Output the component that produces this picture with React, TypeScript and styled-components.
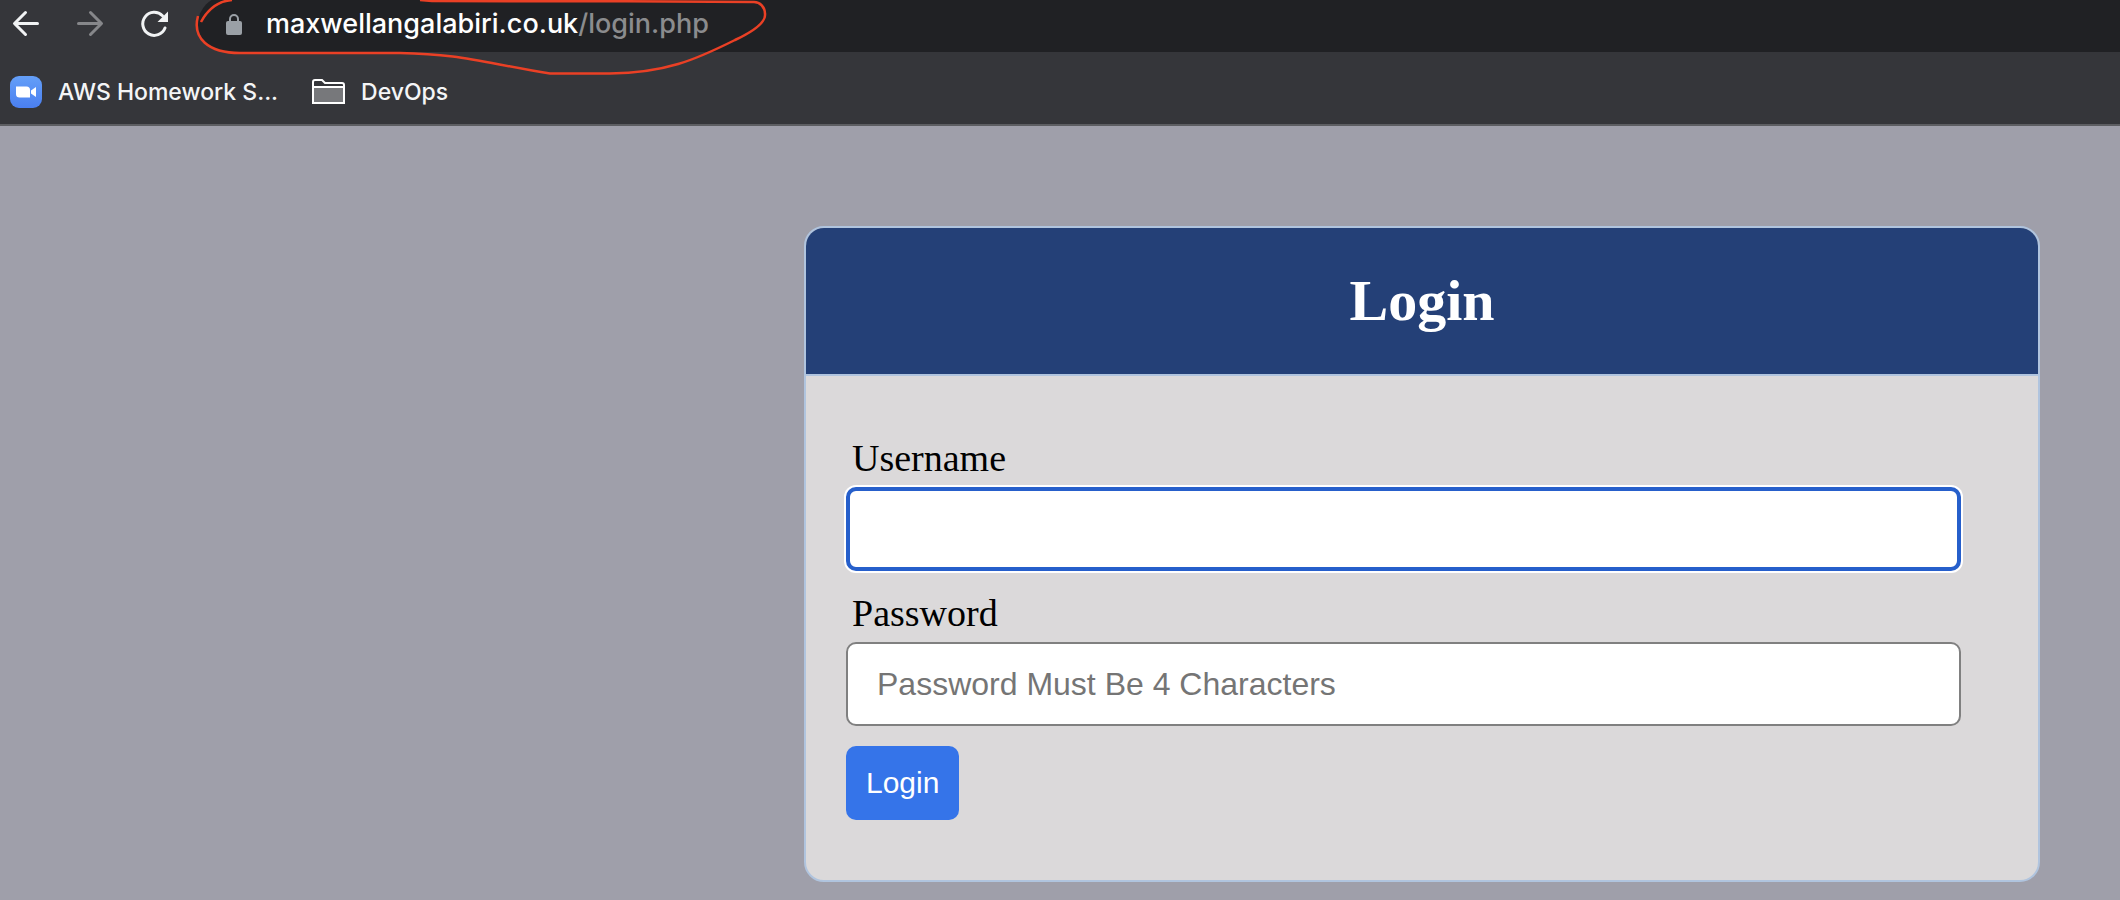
import React from "react";
import styled, { createGlobalStyle } from "styled-components";

const GlobalStyle = createGlobalStyle`
  *, *::before, *::after { box-sizing: border-box; }
  body {
    margin: 0;
    background: #9f9faa;
    font-family: "Liberation Serif", "Times New Roman", serif;
  }
`;

const Browser = styled.header`
  position: relative;
  background: #35363a;
  border-bottom: 2px solid #5d5e62;
  font-family: Inter, "Liberation Sans", sans-serif;
  font-weight: 500;
`;

const Toolbar = styled.div`
  display: flex;
  align-items: flex-end;
  height: 52px;
  overflow: hidden;
`;

const NavButtons = styled.nav`
  display: flex;
  flex: none;
  gap: 24px;
  padding: 0 24px 8px 6px;
`;

const NavButton = styled.button`
  width: 40px;
  height: 40px;
  padding: 0;
  border: 0;
  background: none;
  color: ${(p) => (p.disabled ? "#86878a" : "#f1f3f4")};

  svg { display: block; }
`;

const AddressBar = styled.a`
  display: flex;
  flex: 1;
  align-items: center;
  gap: 24px;
  height: 56px;
  padding-left: 28px;
  border-radius: 28px 0 0 28px;
  background: #202124;
  color: #ffffff;
  font-size: 27px;
  line-height: 32px;
  white-space: nowrap;
  text-decoration: none;
`;

const UrlPath = styled.span`
  color: #8b8c8e;
`;

const Bookmarks = styled.div`
  display: flex;
  align-items: center;
  gap: 34px;
  height: 72px;
  padding: 8px 10px 0;
`;

const Bookmark = styled.a`
  display: flex;
  align-items: center;
  gap: 16px;
  color: #f4f5f6;
  font-size: 23px;
  line-height: 30px;
  white-space: nowrap;
  text-decoration: none;
`;

const Annotation = styled.svg`
  position: absolute;
  top: 0;
  left: 0;
  pointer-events: none;
`;

const Main = styled.main`
  padding: 100px 80px 18px 40px;
`;

const Card = styled.section`
  width: 63%;
  min-width: 480px;
  max-width: 1236px;
  margin-left: auto;
  overflow: hidden;
  border: 2px solid #b0c4de;
  border-radius: 20px;
  background: #dbd9da;
`;

const CardHeader = styled.div`
  padding: 40px;
  border-bottom: 2px solid #b0c4de;
  background: #244077;
  color: #ffffff;
  text-align: center;
`;

const Title = styled.h2`
  margin: 0;
  font-size: 58px;
  line-height: 66px;
`;

const Form = styled.form`
  display: flex;
  flex-direction: column;
  align-items: flex-start;
  gap: 20px;
  padding: 60px 77px 60px 40px;
`;

const Field = styled.div`
  display: flex;
  flex-direction: column;
  gap: 7px;
  width: 100%;
`;

const Label = styled.label`
  padding-left: 6px;
  color: #000000;
  font-size: 38px;
  line-height: 44px;
`;

const TextInput = styled.input`
  width: 100%;
  height: 84px;
  padding: 0 29px;
  border: 2px solid #808080;
  border-radius: 10px;
  background: #ffffff;
  font-family: "Liberation Sans", Arial, sans-serif;
  font-size: 32px;

  &::placeholder { color: #757575; opacity: 1; }

  &:focus {
    border: 4px solid #265fcb;
    outline: none;
    box-shadow: 0 0 0 2px #ffffff;
    caret-color: transparent;
  }
`;

const SubmitButton = styled.button`
  padding: 20px;
  border: 0;
  border-radius: 10px;
  background: #3574e9;
  color: #ffffff;
  font-family: "Liberation Sans", Arial, sans-serif;
  font-size: 30px;
  line-height: 34px;
`;

const BackIcon = () => (
  <svg width="40" height="40" viewBox="0 0 40 40" fill="none" stroke="currentColor" strokeWidth="3" strokeLinecap="round" strokeLinejoin="round">
    <path d="M31.500 19.500H9M19.500 8.500L8.500 19.500L19.500 30.500" />
  </svg>
);

const ForwardIcon = () => (
  <svg width="40" height="40" viewBox="0 0 40 40" fill="none" stroke="currentColor" strokeWidth="3" strokeLinecap="round" strokeLinejoin="round">
    <path d="M8.500 19.500H31M20.500 8.500L31.500 19.500L20.500 30.500" />
  </svg>
);

const ReloadIcon = () => (
  <svg width="40" height="40" viewBox="0 0 40 40" fill="none">
    <path d="M31 24A11.500 11.500 0 1 1 28.500 11.800" stroke="currentColor" strokeWidth="3" strokeLinecap="round" />
    <path d="M34 7.500V18H23.500Z" fill="currentColor" />
  </svg>
);

const LockIcon = () => (
  <svg width="16" height="22" viewBox="0 0 16 22" fill="none">
    <path d="M4 9V6A4 4 0 0 1 12 6V9" stroke="#9aa0a6" strokeWidth="2" />
    <rect y="8" width="16" height="14" rx="2" fill="#9aa0a6" />
  </svg>
);

const ZoomIcon = () => (
  <svg width="32" height="32" viewBox="0 0 32 32">
    <defs>
      <linearGradient id="zoom" x1="0" y1="0" x2="0" y2="1">
        <stop offset="0" stopColor="#649ff8" />
        <stop offset="1" stopColor="#4a7ff0" />
      </linearGradient>
    </defs>
    <rect width="32" height="32" rx="9" fill="url(#zoom)" />
    <path d="M6 10.500H16.500Q20 10.500 20 14V21.500H9.500Q6 21.500 6 18Z" fill="#fff" />
    <path d="M21 14.500L26 11V21L21 17.500Z" fill="#fff" />
  </svg>
);

const FolderIcon = () => (
  <svg width="33" height="26" viewBox="0 0 33 26">
    <path d="M1 24V3Q1 1 3 1H10L13 4H30Q32 4 32 6V24Z" fill="#35363a" stroke="#fff" strokeWidth="2" />
    <path d="M2 9H31V23H2Z" fill="#77787b" />
    <path d="M1 8H32" stroke="#fff" strokeWidth="2" />
  </svg>
);

export default function App() {
  return (
    <>
      <GlobalStyle />
      <Browser>
        <Toolbar>
          <NavButtons aria-label="Browser">
            <NavButton type="button" aria-label="Back"><BackIcon /></NavButton>
            <NavButton type="button" aria-label="Forward" disabled><ForwardIcon /></NavButton>
            <NavButton type="button" aria-label="Reload"><ReloadIcon /></NavButton>
          </NavButtons>
          <AddressBar href="#login">
            <LockIcon />
            <span>maxwellangalabiri.co.uk<UrlPath>/login.php</UrlPath></span>
          </AddressBar>
        </Toolbar>
        <Bookmarks>
          <Bookmark href="#aws"><ZoomIcon />AWS Homework S...</Bookmark>
          <Bookmark href="#devops"><FolderIcon />DevOps</Bookmark>
        </Bookmarks>
        <Annotation width="780" height="80" viewBox="0 0 780 80" fill="none" stroke="#ea4025" strokeWidth="2.500" aria-hidden="true">
          <path d="M201 22C208 9 218 1 232 0M198 16C192 38 208 53 240 53H400C460 54 480 62 550 73.500H610C665 73 695 60 735 40C752 32 766 23 765 14C765 7 760 2 754 2C650 1 520 1.500 432 1L420 0" />
        </Annotation>
      </Browser>
      <Main>
        <Card>
          <CardHeader><Title>Login</Title></CardHeader>
          <Form onSubmit={(e) => e.preventDefault()}>
            <Field>
              <Label htmlFor="username">Username</Label>
              <TextInput id="username" type="text" autoFocus />
            </Field>
            <Field>
              <Label htmlFor="password">Password</Label>
              <TextInput id="password" type="password" placeholder="Password Must Be 4 Characters" />
            </Field>
            <SubmitButton type="submit">Login</SubmitButton>
          </Form>
        </Card>
      </Main>
    </>
  );
}
